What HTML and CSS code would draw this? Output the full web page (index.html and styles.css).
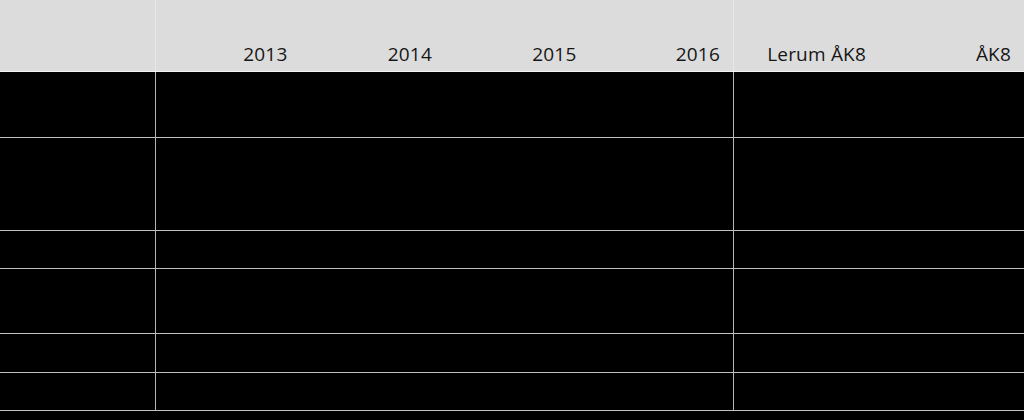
FILE: index.html
```html
<!DOCTYPE html>
<html lang="sv">
<head>
<meta charset="utf-8">
<title>Tabell</title>
<link rel="stylesheet" href="styles.css">
</head>
<body>
<div class="table">
  <div class="row head">
    <div class="cell sep"></div>
    <div class="cell">2013</div>
    <div class="cell">2014</div>
    <div class="cell">2015</div>
    <div class="cell sep">2016</div>
    <div class="cell">Lerum ÅK8</div>
    <div class="cell">ÅK8</div>
  </div>
  <div class="row r1">
    <div class="cell sep"></div><div class="cell"></div><div class="cell"></div><div class="cell"></div><div class="cell sep"></div><div class="cell"></div><div class="cell"></div>
  </div>
  <div class="row r2">
    <div class="cell sep"></div><div class="cell"></div><div class="cell"></div><div class="cell"></div><div class="cell sep"></div><div class="cell"></div><div class="cell"></div>
  </div>
  <div class="row r3">
    <div class="cell sep"></div><div class="cell"></div><div class="cell"></div><div class="cell"></div><div class="cell sep"></div><div class="cell"></div><div class="cell"></div>
  </div>
  <div class="row r4">
    <div class="cell sep"></div><div class="cell"></div><div class="cell"></div><div class="cell"></div><div class="cell sep"></div><div class="cell"></div><div class="cell"></div>
  </div>
  <div class="row r5">
    <div class="cell sep"></div><div class="cell"></div><div class="cell"></div><div class="cell"></div><div class="cell sep"></div><div class="cell"></div><div class="cell"></div>
  </div>
  <div class="row r6">
    <div class="cell sep"></div><div class="cell"></div><div class="cell"></div><div class="cell"></div><div class="cell sep"></div><div class="cell"></div><div class="cell"></div>
  </div>
</div>
</body>
</html>
```
FILE: styles.css
```css
* { box-sizing: border-box; }
html, body { margin: 0; padding: 0; background: #000; }
body { width: 1024px; height: 420px; overflow: hidden; font-family: "Open Sans", "Noto Sans", sans-serif; }
.table { display: flex; flex-direction: column; }
.row {
  display: grid;
  grid-template-columns: 156px repeat(4, 1fr) 145px 145px;
  border-bottom: 1px solid #c2c2c2;
}
.cell.sep { border-right: 1px solid #b6b6b6; }
.head { height: 72px; background: #dcdcdc; border-bottom-color: #f2f2f2; }
.head .cell {
  display: flex;
  align-items: flex-end;
  justify-content: flex-end;
  padding: 0 13px 4px 0;
  font-size: 19px;
  line-height: 25px;
  letter-spacing: 0.2px;
  color: #161616;
}
.head .cell.sep { border-right-color: #e8e8e8; }
.r1 { height: 66px; }
.r2 { height: 93px; }
.r3 { height: 38px; }
.r4 { height: 65px; }
.r5 { height: 39px; }
.r6 { height: 38px; }
```
